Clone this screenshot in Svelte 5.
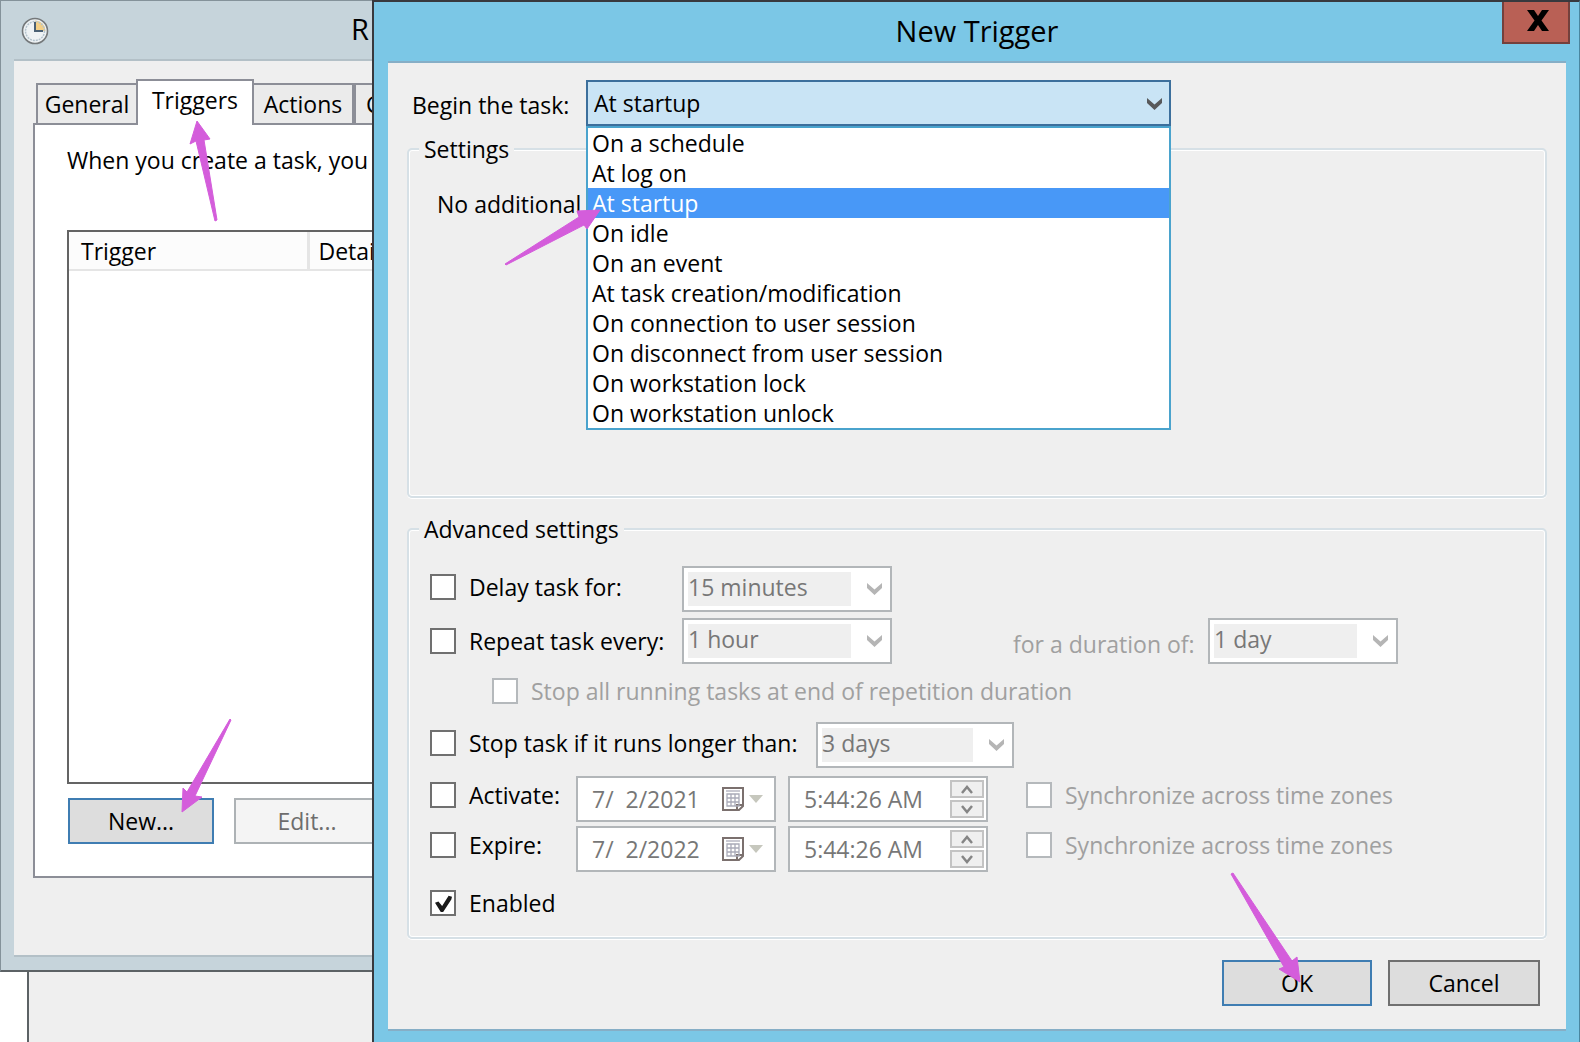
<script>
  const tabs = ['General', 'Triggers', 'Actions', 'C'];
  const events = [
    'On a schedule',
    'At log on',
    'At startup',
    'On idle',
    'On an event',
    'At task creation/modification',
    'On connection to user session',
    'On disconnect from user session',
    'On workstation lock',
    'On workstation unlock'
  ];
  let begin = $state('At startup');
  const dates = [
    { id: 'activate', label: 'Activate:', date: '7/  2/2021', time: '5:44:26 AM' },
    { id: 'expire', label: 'Expire:', date: '7/  2/2022', time: '5:44:26 AM' }
  ];
  const arrows = [
    '197,121 210,139 204,140 217,220 215,221 196,141 190,144',
    '182,812 183,788 187,792 230,719 231,720 195,796 202,797',
    '600,210 577,211 579,217 505,264 506,265 584,225 587,229',
    '1300,982 1297,957 1292,961 1233,873 1231,874 1284,967 1279,969'
  ];
</script>

{#snippet chevron()}
  <svg class="chevron" viewBox="0 0 15 12" width="15" height="12" aria-hidden="true">
    <path d="M0 0L7.500 6.500L15 0V5L7.500 12L0 5Z" fill="currentColor" />
  </svg>
{/snippet}

{#snippet combo(id, value, size)}
  <div class="combo {size}">
    <select {id} disabled aria-label={value}><option>{value}</option></select>
    {@render chevron()}
  </div>
{/snippet}

<div class="screen">
  <div class="left">
    <section class="window back" aria-label="Task properties">
      <header class="back-title">
        <svg viewBox="0 0 28 28" width="28" height="28" aria-hidden="true">
          <circle cx="14" cy="14" r="12.500" fill="#eef2f4" stroke="#74787a" stroke-width="1.600" />
          <path d="M14 14V3.500A10.500 10.500 0 0 1 24.500 14Z" fill="#f3cf86" />
          <circle cx="14" cy="14" r="9.500" fill="none" stroke="#b4c3cd" stroke-width="1.500" stroke-dasharray="2 1" />
          <path d="M14 5V14H22" fill="none" stroke="#4a6074" stroke-width="2" />
        </svg>
        <h2>R</h2>
      </header>
      <div class="back-body">
        <div class="tabs" role="tablist">
          {#each tabs as tab}
            <button role="tab" class="tab" class:active={tab === 'Triggers'} aria-selected={tab === 'Triggers'}>{tab}</button>
          {/each}
        </div>
        <div class="panel" role="tabpanel">
          <p>When you create a task, you c</p>
          <div class="list">
            <table>
              <thead><tr><th>Trigger</th><th>Detai</th></tr></thead>
            </table>
          </div>
          <div class="panel-actions">
            <button class="push primary">New...</button>
            <button class="push" disabled>Edit...</button>
          </div>
        </div>
      </div>
    </section>
    <div class="behind"></div>
  </div>

  <section class="window front" aria-labelledby="dialog-title">
    <header class="front-title">
      <h1 id="dialog-title">New Trigger</h1>
      <button class="close" aria-label="Close">
        <svg viewBox="0 0 22 21" width="22" height="21" aria-hidden="true">
          <path d="M0 0H7L11 6L15 0H22L14.500 10.500L22 21H15L11 15L7 21H0L7.500 10.500Z" fill="#000" />
        </svg>
      </button>
    </header>

    <div class="dialog">
      <div class="begin">
        <label for="begin">Begin the task:</label>
        <div class="picker">
          <select id="begin" bind:value={begin}>
            {#each events as event}<option>{event}</option>{/each}
          </select>
          {@render chevron()}
          <ul class="menu" role="listbox" aria-label="Begin the task">
            {#each events as event}
              <li role="option" aria-selected={event === begin} class:selected={event === begin}>{event}</li>
            {/each}
          </ul>
        </div>
      </div>

      <fieldset class="settings">
        <legend>Settings</legend>
        <p>No additional</p>
      </fieldset>

      <fieldset class="advanced">
        <legend>Advanced settings</legend>
        <div class="row first">
          <label class="check name"><input type="checkbox" />Delay task for:</label>
          {@render combo('delay', '15 minutes', 'wide')}
        </div>
        <div class="row repeat">
          <label class="check name"><input type="checkbox" />Repeat task every:</label>
          {@render combo('repeat', '1 hour', 'wide')}
          <label class="duration" for="duration">for a duration of:</label>
          {@render combo('duration', '1 day', 'narrow')}
        </div>
        <div class="row sub">
          <label class="check off"><input type="checkbox" disabled />Stop all running tasks at end of repetition duration</label>
        </div>
        <div class="row">
          <label class="check long"><input type="checkbox" />Stop task if it runs longer than:</label>
          {@render combo('limit', '3 days', 'medium')}
        </div>
        <div class="dates">
          {#each dates as d}
            <div class="row dated">
              <label class="check short"><input type="checkbox" />{d.label}</label>
              <div class="field">
                <input type="text" value={d.date} disabled aria-label="{d.label} date" />
                <svg viewBox="0 0 42 24" width="42" height="24" aria-hidden="true">
                  <path d="M1 1H21V19L17 23H1Z" fill="#fff" stroke="#7b706e" stroke-width="2" />
                  <path d="M15 23V18H21" fill="none" stroke="#7b706e" stroke-width="2" />
                  <path d="M4 4H18" stroke="#c9c9d2" stroke-width="2" />
                  <path d="M5 7H17V19H5ZM9 7V19M13 7V19M5 11H17M5 15H17" fill="none" stroke="#a9aab8" stroke-width="1.300" />
                  <path d="M27 8H41L34 16Z" fill="#c6c7bd" />
                </svg>
              </div>
              <div class="field time">
                <input type="text" value={d.time} disabled aria-label="{d.label} time" />
                <div class="spin">
                  <button disabled aria-label="Increase"><svg viewBox="0 0 12 9" width="12" height="9"><path d="M1 8L6 2L11 8" fill="none" stroke="#858585" stroke-width="2.500" /></svg></button>
                  <button disabled aria-label="Decrease"><svg viewBox="0 0 12 9" width="12" height="9"><path d="M1 1L6 7L11 1" fill="none" stroke="#858585" stroke-width="2.500" /></svg></button>
                </div>
              </div>
              <label class="check off sync"><input type="checkbox" disabled />Synchronize across time zones</label>
            </div>
          {/each}
        </div>
        <div class="row enabled">
          <label class="check"><input type="checkbox" checked />Enabled</label>
        </div>
      </fieldset>

      <footer>
        <button class="push primary">OK</button>
        <button class="push">Cancel</button>
      </footer>
    </div>
  </section>

  <svg class="arrows" aria-hidden="true">
    {#each arrows as points}<polygon {points} />{/each}
  </svg>
</div>

<style>
  :global(body) { margin: 0; }
  .screen, .screen * { box-sizing: border-box; }
  .screen {
    position: relative;
    display: grid;
    grid-template-columns: 372px 1fr;
    min-height: 100vh;
    overflow: hidden;
    background: #fff;
    color: #000;
    font-family: "Open Sans", "Noto Sans", sans-serif;
    font-size: 23px;
    line-height: 30px;
  }
  button, input, select { font: inherit; color: inherit; margin: 0; border-radius: 0; }
  h1, h2, p, ul { margin: 0; padding: 0; }
  h1, h2 { font-size: 29px; line-height: 40px; font-weight: 400; }

  .left { display: flex; flex-direction: column; overflow: hidden; min-width: 0; }
  .back {
    flex: 1;
    display: flex;
    flex-direction: column;
    background: #c6d4db;
    border: 1px solid #84929a;
    border-right: 0;
    border-bottom: 2px solid #5c6265;
    padding: 0 0 13px 13px;
  }
  .back-title { display: flex; align-items: center; height: 58px; padding: 2px 0 0 7px; }
  .back-title h2 { margin: -4px 0 0 302px; }
  .back-body {
    flex: 1;
    display: flex;
    flex-direction: column;
    background: #efefef;
    border-top: 2px solid #b3c0c7;
    border-bottom: 2px solid #b3c0c7;
    padding: 18px 0 77px 19px;
  }
  .tabs { display: flex; align-items: flex-end; height: 44px; padding-left: 3px; }
  .tab {
    height: 40px;
    flex: none;
    padding: 0 10px;
    border: 2px solid #8c8e97;
    border-bottom: 0;
    background: #ebebeb;
    width: 102px;
    display: flex;
    align-items: center;
    justify-content: center;
    white-space: nowrap;
  }
  .tab:last-child { width: 140px; justify-content: flex-start; }
  .tab.active {
    position: relative;
    z-index: 1;
    width: 118px;
    height: 46px;
    margin: 0 -2px -2px;
    padding-bottom: 6px;
    background: #fff;
  }
  .panel {
    flex: 1;
    display: flex;
    flex-direction: column;
    background: #fff;
    border: 2px solid #8c8e97;
    border-right: 0;
    padding: 20px 0 32px 32px;
  }
  .panel p { white-space: nowrap; }
  .list { flex: 1; margin-top: 55px; border: 2px solid #646464; border-right: 0; overflow: hidden; }
  table { border-collapse: collapse; table-layout: fixed; width: 400px; }
  th {
    height: 38px;
    padding: 0 0 0 11px;
    font-weight: 400;
    text-align: left;
    border-right: 3px solid #e5e5e5;
    border-bottom: 2px solid #e5e5e5;
    background: #fcfcfc;
  }
  th:first-child { width: 239px; padding-left: 12px; }
  th:last-child { padding-left: 9px; }
  .panel-actions { display: flex; gap: 20px; margin-top: 14px; padding-left: 1px; }
  .panel-actions .push { width: 146px; }
  .behind { height: 70px; margin-left: 27px; background: #efefef; border-left: 2px solid #5c6265; }

  .push { flex: none; height: 46px; padding: 0; border: 2px solid #707070; background: #dddddd; }
  .push.primary { border-color: #3f7db2; }
  .push:disabled { border-color: #adb2b5; background: #f4f4f4; color: #6d6d6d; }

  .front {
    display: flex;
    flex-direction: column;
    background: #7bc7e6;
    border: 2px solid #38393e;
    border-right: 1px solid #4a86a0;
    border-bottom: 0;
    padding: 0 13px 11px 14px;
    min-width: 0;
  }
  .front-title { position: relative; height: 59px; display: flex; justify-content: center; padding-top: 9px; }
  .close {
    position: absolute;
    top: 0;
    right: -4px;
    width: 68px;
    height: 42px;
    padding: 0 0 4px 4px;
    border: 2px solid #74403c;
    border-top: 0;
    background: #b96055;
    display: flex;
    align-items: center;
    justify-content: center;
  }
  .dialog {
    flex: 1;
    display: flex;
    flex-direction: column;
    background: #efefef;
    border-top: 2px solid #86aec6;
    border-bottom: 2px solid #86aec6;
    padding: 17px 19px 23px;
  }
  .begin { display: flex; padding-left: 5px; }
  .begin label { width: 174px; padding-top: 10px; white-space: nowrap; }
  .picker { position: relative; width: 585px; }
  .picker > select {
    appearance: none;
    display: block;
    width: 100%;
    height: 46px;
    padding: 0 40px 0 6px;
    border: 2px solid #3c6f9c;
    background: #c9e4f5;
    outline: 0;
  }
  .picker > .chevron { position: absolute; right: 9px; top: 18px; color: #58595b; pointer-events: none; }
  .menu {
    position: absolute;
    z-index: 2;
    left: 0;
    right: 0;
    top: 46px;
    list-style: none;
    background: #fff;
    border: 2px solid #4aa3cd;
  }
  .menu li { height: 30px; padding-left: 4px; white-space: nowrap; }
  .menu .selected { background: #4898f7; color: #fff; }

  fieldset {
    min-width: 0;
    margin: 0;
    border: 2px solid #d6e0e6;
    border-radius: 5px;
    box-shadow: inset 0 0 0 1px #fff, 0 1px 0 #fff;
  }
  legend { margin-left: 10px; padding: 0 5px; background: #efefef; }
  .settings { height: 364px; margin-top: 8px; padding: 25px 0; }
  .settings p { padding-left: 28px; }
  .advanced { margin-top: 16px; padding: 22px 0 21px; }
  .row { display: flex; align-items: flex-start; margin-top: 6px; padding-left: 21px; }
  .first { margin-top: 0; }
  .sub { margin: 14px 0 18px; padding-left: 83px; }
  .dates { margin-top: 8px; }
  .dated { margin-top: 4px; }
  .enabled { margin-top: 12px; }
  .check { display: flex; gap: 13px; align-items: center; height: 26px; margin-top: 8px; white-space: nowrap; }
  .repeat .check { margin-top: 10px; }
  .sub .check { margin-top: 0; }
  .dated .check, .enabled .check { margin-top: 6px; }
  .off, .duration { color: #a0a0a0; }
  .name { width: 252px; }
  .long { width: 386px; }
  .short { width: 146px; }
  .sync { margin-left: 38px; }
  .check input {
    appearance: none;
    flex: none;
    width: 26px;
    height: 26px;
    border: 2px solid #707070;
    background: #fff;
    position: relative;
  }
  .check input:disabled { border-color: #b5b9bc; }
  .check input:checked::after {
    content: "";
    position: absolute;
    inset: 3px 2px 2px 3px;
    background: #1a1a1a;
    clip-path: polygon(0 45%, 20% 38%, 42% 65%, 80% 4%, 100% 10%, 96% 26%, 48% 100%, 34% 100%);
  }
  .combo { display: flex; align-items: center; height: 46px; border: 2px solid #b2b6b9; background: #fff; padding: 4px; color: #777; }
  .combo select {
    appearance: none;
    flex: 1;
    min-width: 0;
    height: 34px;
    padding: 0 0 4px;
    border: 0;
    background: #efefef;
    color: #777;
    opacity: 1;
  }
  .combo .chevron { margin: 0 4px 0 16px; color: #b5b5b5; }
  .wide { width: 210px; }
  .medium { width: 198px; }
  .narrow { width: 190px; }
  .duration { width: 195px; margin: 11px 0 0 121px; white-space: nowrap; }
  .field { display: flex; align-items: center; width: 200px; height: 46px; border: 2px solid #b2b6b9; background: #fff; color: #777; padding: 0 10px 0 14px; }
  .field input { flex: 1; min-width: 0; width: 0; border: 0; padding: 0; background: transparent; color: #777; }
  .field.time { margin-left: 12px; padding-right: 2px; }
  .spin { display: flex; flex-direction: column; gap: 2px; }
  .spin button { width: 34px; height: 18px; padding: 0; border: 2px solid #c3c3c3; background: #efefef; display: flex; align-items: center; justify-content: center; }

  footer { display: flex; justify-content: flex-end; gap: 16px; margin-top: auto; padding-right: 7px; }
  footer .push { width: 152px; }
  footer .primary { width: 150px; }

  .arrows { position: absolute; z-index: 3; inset: 0; width: 100%; height: 100%; pointer-events: none; }
  .arrows polygon { fill: #d45ddb; stroke: #d45ddb; stroke-linejoin: round; }
</style>
